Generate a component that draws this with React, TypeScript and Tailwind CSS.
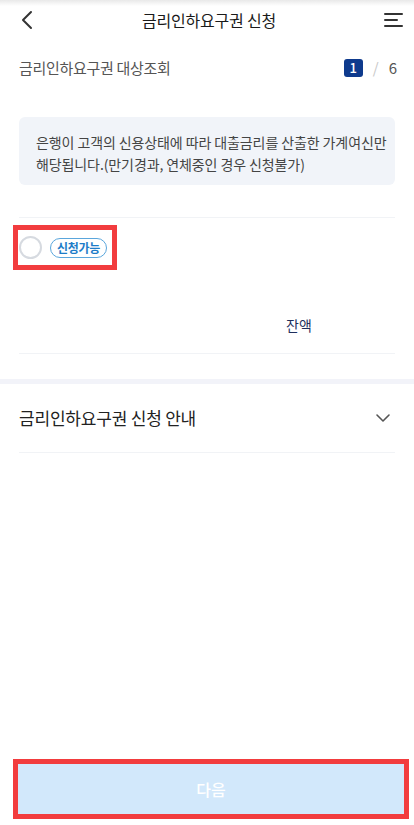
import { ChevronDown } from 'lucide-react';

const font = { fontFamily: '"Noto Sans CJK KR", "Noto Sans", sans-serif' };

export default function App() {
  return (
    <div className="relative w-[414px] h-[825px] bg-white overflow-hidden" style={font}>
      {/* top edge shade */}
      <div className="absolute inset-x-0 top-0 h-[6px] bg-gradient-to-b from-[#e9e9e9] to-white" />

      {/* Header */}
      <div className="relative h-[40px] px-[16px] flex items-center justify-between">
        <svg width="14" height="20" viewBox="0 0 14 20" className="ml-[4px]">
          <polyline points="11,2 3,10 11,18" fill="none" stroke="#333" strokeWidth="2" strokeLinecap="round" strokeLinejoin="round" />
        </svg>
        <h1 className="text-[16px] font-normal text-[#1a1a1a] tracking-[-0.2px]">금리인하요구권 신청</h1>
        <div className="w-[19px] flex flex-col gap-[4px] mr-[-5px]">
          <span className="block h-[2px] w-[19px] bg-[#333] rounded" />
          <span className="block h-[2px] w-[14px] bg-[#333] rounded" />
          <span className="block h-[2px] w-[19px] bg-[#333] rounded" />
        </div>
      </div>

      {/* Step row */}
      <div className="px-[19px] mt-[14px] flex items-center justify-between h-[28px]">
        <span className="text-[15px] text-[#555] tracking-[-0.3px]">금리인하요구권 대상조회</span>
        <div className="flex items-center gap-[10px] text-[15px] mr-[-2px]">
          <span className="w-[19px] h-[18px] rounded-[3px] bg-[#0e3a8d] text-white text-[13px] flex items-center justify-center font-medium">1</span>
          <span className="text-[#c8c8c8]">/</span>
          <span className="text-[#555]">6</span>
        </div>
      </div>

      {/* Info box */}
      <div className="mx-[19px] mt-[35px] h-[68px] rounded-[6px] bg-[#f1f4f9] pl-[17px] pt-[14px] text-[14px] leading-[22px] text-[#444] tracking-[-0.1px] whitespace-nowrap">
        은행이 고객의 신용상태에 따라 대출금리를 산출한 가계여신만
        <br />
        해당됩니다.(만기경과, 연체중인 경우 신청불가)
      </div>

      <div className="mx-[19px] mt-[32px] h-px bg-[#f1f3f6]" />

      {/* Item */}
      <div className="px-[19px] pt-[18px]">
        <div className="flex items-center gap-[8px]">
          <span className="w-[23px] h-[23px] rounded-full border-2 border-[#d6dae0] bg-white" />
          <span className="h-[20px] px-[6px] rounded-full border border-[#5aa6dc] text-[#1d7cc8] text-[12px] font-bold flex items-center leading-none tracking-[-0.3px]">
            신청가능
          </span>
        </div>
        <div className="mt-[56px] pl-[267px] text-[14px] text-[#1f2f5c] font-normal h-[20px] leading-[20px]">잔액</div>
      </div>

      <div className="mx-[19px] mt-[18px] h-px bg-[#f1f3f6]" />

      <div className="mt-[25px] h-[5px] bg-[#f2f3f9]" />

      {/* Accordion */}
      <div className="px-[19px] flex items-center justify-between h-[68px]">
        <span className="text-[17px] font-normal text-[#222] tracking-[-0.2px]">금리인하요구권 신청 안내</span>
        <ChevronDown className="w-[24px] h-[24px] text-[#555]" strokeWidth={1.6} />
      </div>
      <div className="mx-[19px] h-px bg-[#f1f3f6]" />

      {/* Bottom button */}
      <div className="absolute left-[13px] right-[5px] top-[759px] h-[60px] border-[5px] border-[#f23c3e]">
        <div className="w-full h-full bg-[#d2e8fb] flex items-center justify-center text-white text-[16px] font-medium">
          다음
        </div>
      </div>

      {/* annotation box */}
      <div className="absolute left-[13px] top-[225px] w-[104px] h-[45px] border-[5px] border-[#f23c3e]" />
    </div>
  );
}
